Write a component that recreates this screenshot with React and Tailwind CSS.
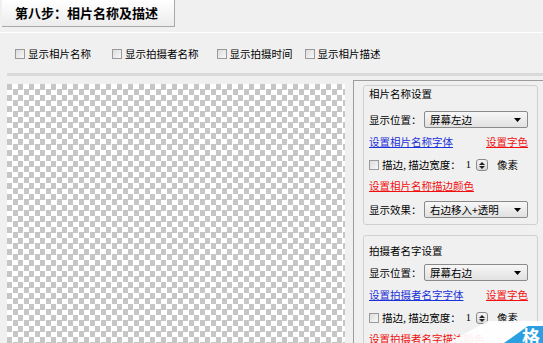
const font = "font-['Noto_Sans_CJK_SC','Liberation_Sans',sans-serif]";

function Box() {
  return (
    <span className="inline-block h-[10px] w-[10px] shrink-0 border border-[#9a9a9a] bg-gradient-to-br from-[#dcdcdc] to-[#f8f8f8]" />
  );
}

function Select({ value }) {
  return (
    <div className="flex h-[17px] w-[104px] shrink-0 items-center justify-between rounded-[2px] border border-[#8a8a8a] bg-gradient-to-b from-[#f7f7f7] to-[#e1e1e1] pl-[5px] pr-[6px]">
      <span className="whitespace-nowrap">{value}</span>
      <svg width="7" height="4" viewBox="0 0 7 4">
        <path d="M0 0h7L3.5 4z" fill="#000" />
      </svg>
    </div>
  );
}

function Spin() {
  return (
    <span className="ml-[5px] flex h-[12px] w-[12px] flex-col items-center justify-center gap-[1px] rounded-[3px] border border-[#8a8a8a] bg-gradient-to-b from-[#f4f4f4] to-[#dadada]">
      <svg width="6" height="3" viewBox="0 0 6 3"><path d="M0 3h6L3 0z" fill="#222" /></svg>
      <svg width="6" height="3" viewBox="0 0 6 3"><path d="M0 0h6L3 3z" fill="#222" /></svg>
    </span>
  );
}

function Group({ title, pos, font: f, edge, effect, top, selTop }) {
  return (
    <div className={`w-[175px] rounded-[3px] border border-[#d0d0d0] pl-[5px] pr-[9px] whitespace-nowrap ${top}`}>
      <div className="h-[12px] leading-[12px]">{title}</div>
      <div className={`flex h-[17px] items-center ${selTop}`}>
        <span className="w-[55px] shrink-0">显示位置：</span>
        <Select value={pos} />
      </div>
      <div className="mt-[8px] flex h-[12px] items-center justify-between leading-[12px]">
        <span className="text-[#1c32d8] underline">{f}</span>
        <span className="text-[#f01010] underline">设置字色</span>
      </div>
      <div className="mt-[10px] flex h-[14px] items-center">
        <Box />
        <span className="ml-[3px]">描边, 描边宽度：</span>
        <span className="ml-[5px] font-['Liberation_Serif',serif]">1</span>
        <Spin />
        <span className="ml-[9px]">像素</span>
      </div>
      <div className="mt-[8px] h-[12px] leading-[12px] text-[#f01010] underline">{edge}</div>
      {effect && (
        <div className="mt-[9px] flex h-[17px] items-center">
          <span className="w-[55px] shrink-0">显示效果：</span>
          <Select value={effect} />
        </div>
      )}
      {effect && <div className="h-[6px]" />}
    </div>
  );
}

export default function App() {
  const checks = [
    ["显示相片名称", "ml-[15px]"],
    ["显示拍摄者名称", "ml-[21px]"],
    ["显示拍摄时间", "ml-[18px]"],
    ["显示相片描述", "ml-[12px]"],
  ];
  return (
    <div className={`relative h-[343px] w-[543px] overflow-hidden bg-[#f0f0f0] text-[10.5px] text-black ${font}`}>
      {/* 标题 */}
      <div className="h-[33px] border-b border-white">
        <div className="ml-[2px] flex h-[27px] w-[173px] items-center border-b border-r border-[#a8a8a8] bg-gradient-to-b from-white to-[#ececec] pl-[13px] text-[13px] font-bold">
          第八步：相片名称及描述
        </div>
      </div>

      {/* 选项 */}
      <div className="flex h-[40px] items-center pt-[1px]">
        {checks.map(([t, m]) => (
          <label key={t} className={`flex items-center ${m}`}>
            <Box />
            <span className="ml-[3px]">{t}</span>
          </label>
        ))}
      </div>

      {/* 主体 */}
      <div className="ml-[7px] flex border-t-[3px] border-[#d9d9d9]">
        <div className="w-[338px] pt-[8px]">
          <div className="h-[270px] bg-[conic-gradient(#ffffff_25%,#c6c6c6_0_50%,#ffffff_0_75%,#c6c6c6_0)] bg-[length:11px_11px]" />
        </div>
        <div className="ml-[8px] mt-[4px] h-[300px] flex-1 border-l border-t border-[#9c9c9c] pl-[9px] pt-[4px]">
          <Group
            title="相片名称设置"
            pos="屏幕左边"
            font="设置相片名称字体"
            edge="设置相片名称描边颜色"
            effect="右边移入+透明"
            top="pt-[2px]"
            selTop="mt-[11px]"
          />
          <div className="mt-[10px]">
            <Group
              title="拍摄者名字设置"
              pos="屏幕右边"
              font="设置拍摄者名字字体"
              edge="设置拍摄者名字描边颜色"
              top="pt-[9px]"
              selTop="mt-[7px]"
            />
          </div>
        </div>
      </div>

      {/* 水印 */}
      <svg className="absolute bottom-0 right-0" width="95" height="26" viewBox="0 0 95 26">
        <path d="M0 26 L40 4 L95 4 L95 26 Z" fill="#ffffff" opacity="0.92" />
        <path d="M56 26 L80 9 L95 9 L95 26 Z" fill="#2b9fe0" />
      </svg>
      <span className="absolute bottom-[-5px] right-[3px] text-[18px] font-bold leading-[24px] text-white">格</span>
    </div>
  );
}
